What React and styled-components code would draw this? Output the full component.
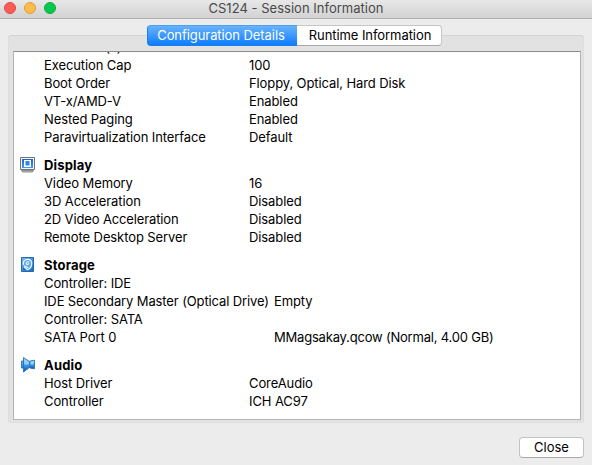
import React from 'react';
import styled, { createGlobalStyle, css } from 'styled-components';

const GlobalStyle = createGlobalStyle`
  * { box-sizing: border-box; }
  body { margin: 0; background: #ececec; overflow: hidden; }
`;

const Window = styled.div`
  width: 592px;
  height: 465px;
  display: flex;
  flex-direction: column;
  background: #ececec;
  color: #000;
  font: 13px/18px Inter, "Liberation Sans", sans-serif;
  letter-spacing: -0.1px;
  white-space: nowrap;
`;

const TitleBar = styled.header`
  flex: none;
  height: 19px;
  display: grid;
  grid-template-columns: 1fr auto 1fr;
  align-items: start;
  background: linear-gradient(#e8e8e8, #d2d2d2);
  border-bottom: 1px solid #b1b1b1;
`;

const Lights = styled.div`
  display: flex;
  gap: 8px;
  padding: 2px 0 0 4px;
`;

const Light = styled.span`
  width: 12px;
  height: 12px;
  border-radius: 50%;
  background: ${(p) => p.$fill};
  border: 1px solid ${(p) => p.$edge};
`;

const Title = styled.h1`
  margin: 0;
  font-size: 13px;
  font-weight: 400;
  line-height: 17px;
  letter-spacing: 0.02px;
  color: #4a4a4a;
`;

const Tabs = styled.nav`
  position: relative;
  flex: none;
  display: flex;
  width: 295px;
  height: 21px;
  margin: 6px 0 -11px 147px;
`;

const Tab = styled.button`
  height: 21px;
  padding: 0;
  font: inherit;
  line-height: 19px;
  letter-spacing: -0.07px;
  ${(p) =>
    p.$active
      ? css`
          width: 150px;
          padding-right: 3px;
          border: 1px solid #1c7ff0;
          border-top-color: #4ba2f5;
          border-right: 0;
          border-radius: 4px 0 0 4px;
          color: #fff;
          background: linear-gradient(#69b2fa, #0d7dff);
        `
      : css`
          width: 145px;
          padding-left: 2px;
          border: 1px solid #c6c6c6;
          border-bottom-color: #a9a9a9;
          border-left: 0;
          border-radius: 0 4px 4px 0;
          color: #000;
          background: #fff;
        `}
`;

const Panel = styled.section`
  flex: none;
  width: 576px;
  height: 388px;
  margin-left: 8px;
  padding: 16px 3px 3px 5px;
  display: flex;
  background: #e2e2e2;
  border-radius: 4px;
  box-shadow: inset 0 1px #d3d3d3, inset 0 0 0 1px #dedede;
`;

const Report = styled.div`
  flex: none;
  width: 568px;
  height: 369px;
  overflow: hidden;
  background: #fff;
  border: 1px solid #b4b4b4;
  border-top-color: #8c8c8c;
`;

const Sections = styled.div`
  display: flex;
  flex-direction: column;
  gap: 10px;
  margin-top: -14px;
  padding-left: 6px;
`;

const Section = styled.section`
  display: grid;
  grid-template-columns: 24px 1fr;
`;

const IconCell = styled.div`
  svg { display: block; }
`;

const Heading = styled.h2`
  margin: 0;
  font-size: 13px;
  font-weight: 700;
  line-height: 18px;
  letter-spacing: 0.18px;
`;

const Row = styled.div`
  display: grid;
  grid-template-columns: ${(p) => (p.$wide ? '230px' : '205px')} auto;
  height: 18px;
`;

const Cell = styled.span`
  letter-spacing: ${(p) => p.$tracking || 'inherit'};
`;

const Footer = styled.footer`
  display: flex;
  justify-content: flex-end;
  padding: 14px 8px 0 0;
`;

const CloseButton = styled.button`
  width: 65px;
  height: 21px;
  padding: 0;
  border: 1px solid #c3c3c3;
  border-bottom-color: #aaa;
  border-radius: 4px;
  background: #fff;
  color: #000;
  font: inherit;
  line-height: 19px;
  letter-spacing: 0;
`;

function DisplayIcon() {
  return (
    <svg width="17" height="18" viewBox="0 0 17 18">
      <defs>
        <linearGradient id="screen" x2="0" y2="1">
          <stop stopColor="#1c62cf" />
          <stop offset="1" stopColor="#3f9bfa" />
        </linearGradient>
      </defs>
      <path d="M0.5 1.500h14v12h-14z" fill="#f4f4f0" stroke="#6f7474" />
      <path d="M2 3h11v9H2z" fill="url(#screen)" />
      <path d="M4 4h7v7H4z" fill="#fff" />
      <path d="M5.500 5h4v4.500h-4z" fill="#2f83ee" />
      <path d="M1.500 14.500h12l-1 1.500h-10z" fill="#c4c4c0" stroke="#77797a" strokeWidth=".8" />
    </svg>
  );
}

function StorageIcon() {
  return (
    <svg width="17" height="18" viewBox="0 0 17 18">
      <defs>
        <linearGradient id="disk" x2="1" y2="1">
          <stop stopColor="#7dbcf2" />
          <stop offset="1" stopColor="#1268c2" />
        </linearGradient>
      </defs>
      <path d="M1.500 1.500h12v14h-12z" fill="url(#disk)" stroke="#2468ad" />
      <path d="M3.600 9C2.500 5.500 4.700 3.400 7.600 3.400s4.500 1.800 4.100 4.700c-.4 3-2 5-4.200 5.600L4 10.800" fill="#5aa9ea" stroke="#f0f9ff" strokeWidth="1.200" />
      <path d="M9 6.500C8 5 5.800 6 6.200 7.600c.4 1.300 2.300 1 2.800-.3M4.300 9.700l4 2.100" fill="none" stroke="#f0f9ff" strokeWidth="1.100" />
      <path d="M3 11.500v2.500h2.800z" fill="#1765b4" />
    </svg>
  );
}

function AudioIcon() {
  return (
    <svg width="17" height="18" viewBox="0 0 17 18">
      <defs>
        <linearGradient id="speaker" x2="0" y2="1">
          <stop stopColor="#a7dcff" />
          <stop offset=".45" stopColor="#4ba5f0" />
          <stop offset="1" stopColor="#0754a5" />
        </linearGradient>
      </defs>
      <path d="M1.500 5h2v7h-2zM3.500 1.500L9.800 5.800v5.400L3.500 16z" fill="url(#speaker)" stroke="#2870bb" strokeWidth=".9" />
      <path d="M9.800 5l4.700-.8v8.600l-4.700-.8z" fill="url(#speaker)" stroke="#2870bb" strokeWidth=".9" />
      <path d="M4.300 3.500L8.800 6.300v2.200H4.300zM10.700 6l2.800-.5v3h-2.800z" fill="#c0e6ff" opacity=".6" />
    </svg>
  );
}

const sections = [
  {
    rows: [
      ['Processor(s)', ''],
      ['Execution Cap', '100'],
      ['Boot Order', 'Floppy, Optical, Hard Disk'],
      ['VT-x/AMD-V', 'Enabled'],
      ['Nested Paging', 'Enabled'],
      ['Paravirtualization Interface', 'Default'],
    ],
  },
  {
    title: 'Display',
    Icon: DisplayIcon,
    rows: [
      ['Video Memory', '16'],
      ['3D Acceleration', 'Disabled'],
      ['2D Video Acceleration', 'Disabled', '-0.13px'],
      ['Remote Desktop Server', 'Disabled'],
    ],
  },
  {
    title: 'Storage',
    Icon: StorageIcon,
    wide: true,
    rows: [
      ['Controller: IDE', ''],
      ['IDE Secondary Master (Optical Drive)', 'Empty', '-0.12px'],
      ['Controller: SATA', ''],
      ['SATA Port 0', 'MMagsakay.qcow (Normal, 4.00 GB)', 'inherit', '-0.2px'],
    ],
  },
  {
    title: 'Audio',
    Icon: AudioIcon,
    rows: [
      ['Host Driver', 'CoreAudio'],
      ['Controller', 'ICH AC97'],
    ],
  },
];

export default function App() {
  return (
    <Window>
      <GlobalStyle />
      <TitleBar>
        <Lights>
          <Light $fill="#fc5b57" $edge="#df4744" />
          <Light $fill="#fdbc4b" $edge="#de9f34" />
          <Light $fill="#05c84f" $edge="#08ac3e" />
        </Lights>
        <Title>CS124 - Session Information</Title>
      </TitleBar>
      <Tabs>
        <Tab $active>Configuration Details</Tab>
        <Tab>Runtime Information</Tab>
      </Tabs>
      <Panel>
        <Report>
          <Sections>
            {sections.map(({ title, Icon, wide, rows }, i) => (
              <Section key={i}>
                <IconCell>{Icon && <Icon />}</IconCell>
                <div>
                  {title && <Heading>{title}</Heading>}
                  {rows.map(([label, value, labelTracking, valueTracking]) => (
                    <Row key={label} $wide={wide}>
                      <Cell $tracking={labelTracking}>{label}</Cell>
                      <Cell $tracking={valueTracking}>{value}</Cell>
                    </Row>
                  ))}
                </div>
              </Section>
            ))}
          </Sections>
        </Report>
      </Panel>
      <Footer>
        <CloseButton>Close</CloseButton>
      </Footer>
    </Window>
  );
}
